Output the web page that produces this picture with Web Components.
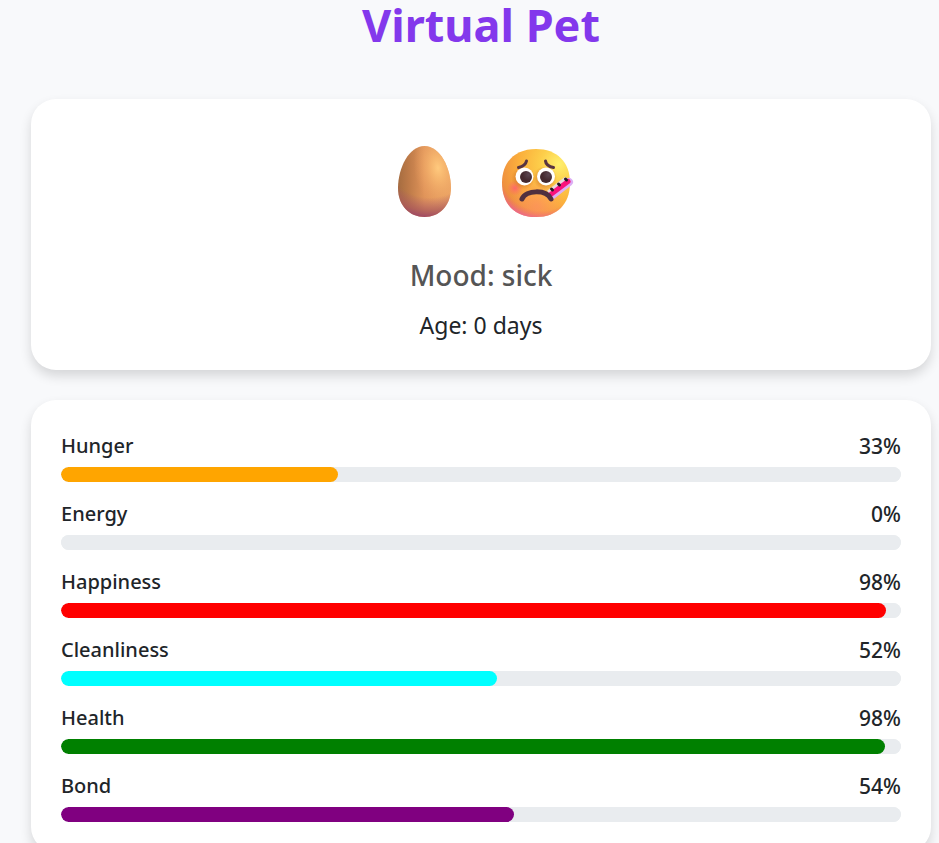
<!DOCTYPE html>
<html lang="en">
<head>
<meta charset="utf-8">
<title>Virtual Pet</title>
<style>
body { margin: 0; background: #f8f9fb; color: #212529; font-family: "Segoe UI", "Noto Sans", sans-serif; overflow-x: hidden; }
</style>
</head>
<body>
<pet-app></pet-app>
<script>
const define = (name, html, setup) => {
  const template = document.createElement('template');
  template.innerHTML = html;
  customElements.define(name, class extends HTMLElement {
    connectedCallback() {
      if (this.shadowRoot) return;
      const root = this.attachShadow({ mode: 'open' });
      root.append(template.content.cloneNode(true));
      if (setup) setup(this, root);
    }
  });
};

define('pet-card', `
<style>
:host { display: block; background: #fff; border-radius: 25px; padding: 30px; box-shadow: 0 6px 12px rgba(0,0,0,.14); }
</style>
<slot></slot>`);

define('pet-egg', `
<style>:host { display: block; } svg { display: block; width: 53px; height: 71px; }</style>
<svg viewBox="0 0 53 71" role="img" aria-label="Egg">
  <defs>
    <linearGradient id="base" x1="0" y1="0" x2="1" y2="0"><stop offset="0" stop-color="#a56c40"/><stop offset=".2" stop-color="#bd7a48"/><stop offset=".5" stop-color="#e0945a"/><stop offset="1" stop-color="#e9a263"/></linearGradient>
    <radialGradient id="light" gradientUnits="userSpaceOnUse" cx="0" cy="0" r="1" gradientTransform="translate(40 22) rotate(-8) scale(24 40)"><stop offset="0" stop-color="#ffca7e"/><stop offset=".3" stop-color="#fbbd72" stop-opacity=".75"/><stop offset="1" stop-color="#f0a263" stop-opacity="0"/></radialGradient>
    <radialGradient id="low" gradientUnits="userSpaceOnUse" cx="0" cy="0" r="1" gradientTransform="translate(32 8) scale(66 64)"><stop offset=".68" stop-color="#a8556a" stop-opacity="0"/><stop offset=".88" stop-color="#a8555c" stop-opacity=".7"/><stop offset="1" stop-color="#9c4666"/></radialGradient>
  </defs>
  <path d="M26.500 0C42 0 53 22 53 42C53 60 41 71 26.500 71S0 60 0 42C0 22 11 0 26.500 0Z" fill="url(#base)"/>
  <path d="M26.500 0C42 0 53 22 53 42C53 60 41 71 26.500 71S0 60 0 42C0 22 11 0 26.500 0Z" fill="url(#light)"/>
  <path d="M26.500 0C42 0 53 22 53 42C53 60 41 71 26.500 71S0 60 0 42C0 22 11 0 26.500 0Z" fill="url(#low)"/>
</svg>`);

define('pet-sick-face', `
<style>:host { display: block; } svg { display: block; width: 73px; height: 71px; }</style>
<svg viewBox="0 0 73 71" role="img" aria-label="Sick face">
  <defs>
    <radialGradient id="skin" gradientUnits="userSpaceOnUse" cx="57" cy="18" r="66"><stop offset="0" stop-color="#fff06e"/><stop offset=".28" stop-color="#fdce4a"/><stop offset=".6" stop-color="#fbb03c"/><stop offset="1" stop-color="#ea8440"/></radialGradient>
    <radialGradient id="chin" gradientUnits="userSpaceOnUse" cx="40" cy="23" r="52"><stop offset=".8" stop-color="#f06a68" stop-opacity="0"/><stop offset="1" stop-color="#e95ea8"/></radialGradient>
    <radialGradient id="warm" gradientUnits="userSpaceOnUse" cx="35" cy="60" r="28"><stop offset="0" stop-color="#ff9062" stop-opacity=".7"/><stop offset="1" stop-color="#ff9862" stop-opacity="0"/></radialGradient>
    <radialGradient id="cheek"><stop offset="0" stop-color="#ff5d72" stop-opacity=".85"/><stop offset="1" stop-color="#ff6b65" stop-opacity="0"/></radialGradient>
    <radialGradient id="shade"><stop offset=".65" stop-color="#c96a24" stop-opacity=".4"/><stop offset="1" stop-color="#d57b2c" stop-opacity="0"/></radialGradient>
    <radialGradient id="pupil" cx=".7" cy=".3"><stop offset="0" stop-color="#594450"/><stop offset="1" stop-color="#44292f"/></radialGradient>
  </defs>
  <path d="M34 3C55 3 68 16 68 37S55 71 34 71S0 58 0 37S13 3 34 3Z" fill="url(#skin)"/>
  <path d="M34 3C55 3 68 16 68 37S55 71 34 71S0 58 0 37S13 3 34 3Z" fill="url(#warm)"/>
  <path d="M34 3C55 3 68 16 68 37S55 71 34 71S0 58 0 37S13 3 34 3Z" fill="url(#chin)"/>
  <circle cx="13" cy="42" r="8" fill="url(#cheek)"/>
  <circle cx="21" cy="32" r="12" fill="url(#shade)"/>
  <circle cx="43" cy="32" r="12" fill="url(#shade)"/>
  <circle cx="22.500" cy="30.500" r="9" fill="#fff"/>
  <circle cx="44" cy="30.500" r="9" fill="#fff"/>
  <circle cx="24" cy="31" r="6" fill="url(#pupil)"/>
  <circle cx="44" cy="31" r="6" fill="url(#pupil)"/>
  <path d="M24.500 15Q23.500 20 16.500 21.500M43.500 15Q44 20 51.500 21.500" fill="none" stroke="#583442" stroke-width="3" stroke-linecap="round"/>
  <path d="M49 50L67 36" stroke="#dcaef5" stroke-width="8" stroke-linecap="round"/>
  <path d="M46 46L64 32" stroke="#e9dade" stroke-width="3"/>
  <path d="M48 49L66 35.500" stroke="#f9127b" stroke-width="5" stroke-linecap="round"/>
  <path d="M49.500 43L50.500 44M56.500 38L57.500 39M63.500 33L64.500 34" stroke="#231925" stroke-width="3" stroke-linecap="round"/>
  <path d="M20 53C24 44 44 43 49 53" fill="none" stroke="#50303f" stroke-width="5" stroke-linecap="round"/>
</svg>`);

define('pet-status', `
<style>
:host { display: flex; flex-direction: column; align-items: center; padding-top: 17px; }
.faces { display: flex; gap: 51px; padding-left: 10px; }
h2 { margin: 37px 0 0; font-size: 28px; line-height: 42px; font-weight: 500; color: #555; }
p { margin: 14px 0 0; font-size: 23px; line-height: 30px; }
</style>
<div class="faces"><pet-egg></pet-egg><pet-sick-face></pet-sick-face></div>
<h2>Mood: sick</h2>
<p>Age: 0 days</p>`);

define('pet-stat', `
<style>
:host { display: block; }
.head { display: flex; justify-content: space-between; margin-bottom: 6px; font-size: 20px; line-height: 30px; font-weight: 500; }
.head span { font-size: 21px; }
progress { display: block; width: 100%; height: 15px; appearance: none; border: 0; border-radius: 10px; overflow: hidden; background: #e9ecef; }
progress::-webkit-progress-bar { background: #e9ecef; border-radius: 10px; }
progress::-webkit-progress-value { background: var(--bar); border-radius: 10px; }
</style>
<div class="head"><label for="bar"></label><span></span></div>
<progress id="bar" max="100"></progress>`, (host, root) => {
  const value = Number(host.getAttribute('value'));
  root.querySelector('label').textContent = host.getAttribute('name');
  root.querySelector('span').textContent = Math.round(value) + '%';
  root.querySelector('progress').value = value;
  host.style.setProperty('--bar', host.getAttribute('color'));
});

define('pet-app', `
<style>
:host { display: block; padding: 0 8px 30px 31px; }
h1 { margin: 0; padding-bottom: 49px; font-size: 45px; line-height: 50px; font-weight: 700; text-align: center; color: #8338ec; }
main { display: grid; gap: 30px; }
.stats { display: grid; gap: 17px; padding-top: 1px; }
</style>
<h1>Virtual Pet</h1>
<main>
  <pet-card><pet-status></pet-status></pet-card>
  <pet-card><div class="stats">
    <pet-stat name="Hunger" value="33" color="orange"></pet-stat>
    <pet-stat name="Energy" value="0" color="yellow"></pet-stat>
    <pet-stat name="Happiness" value="98.2" color="red"></pet-stat>
    <pet-stat name="Cleanliness" value="51.9" color="cyan"></pet-stat>
    <pet-stat name="Health" value="98.1" color="green"></pet-stat>
    <pet-stat name="Bond" value="53.9" color="purple"></pet-stat>
  </div></pet-card>
</main>`);
</script>
</body>
</html>
